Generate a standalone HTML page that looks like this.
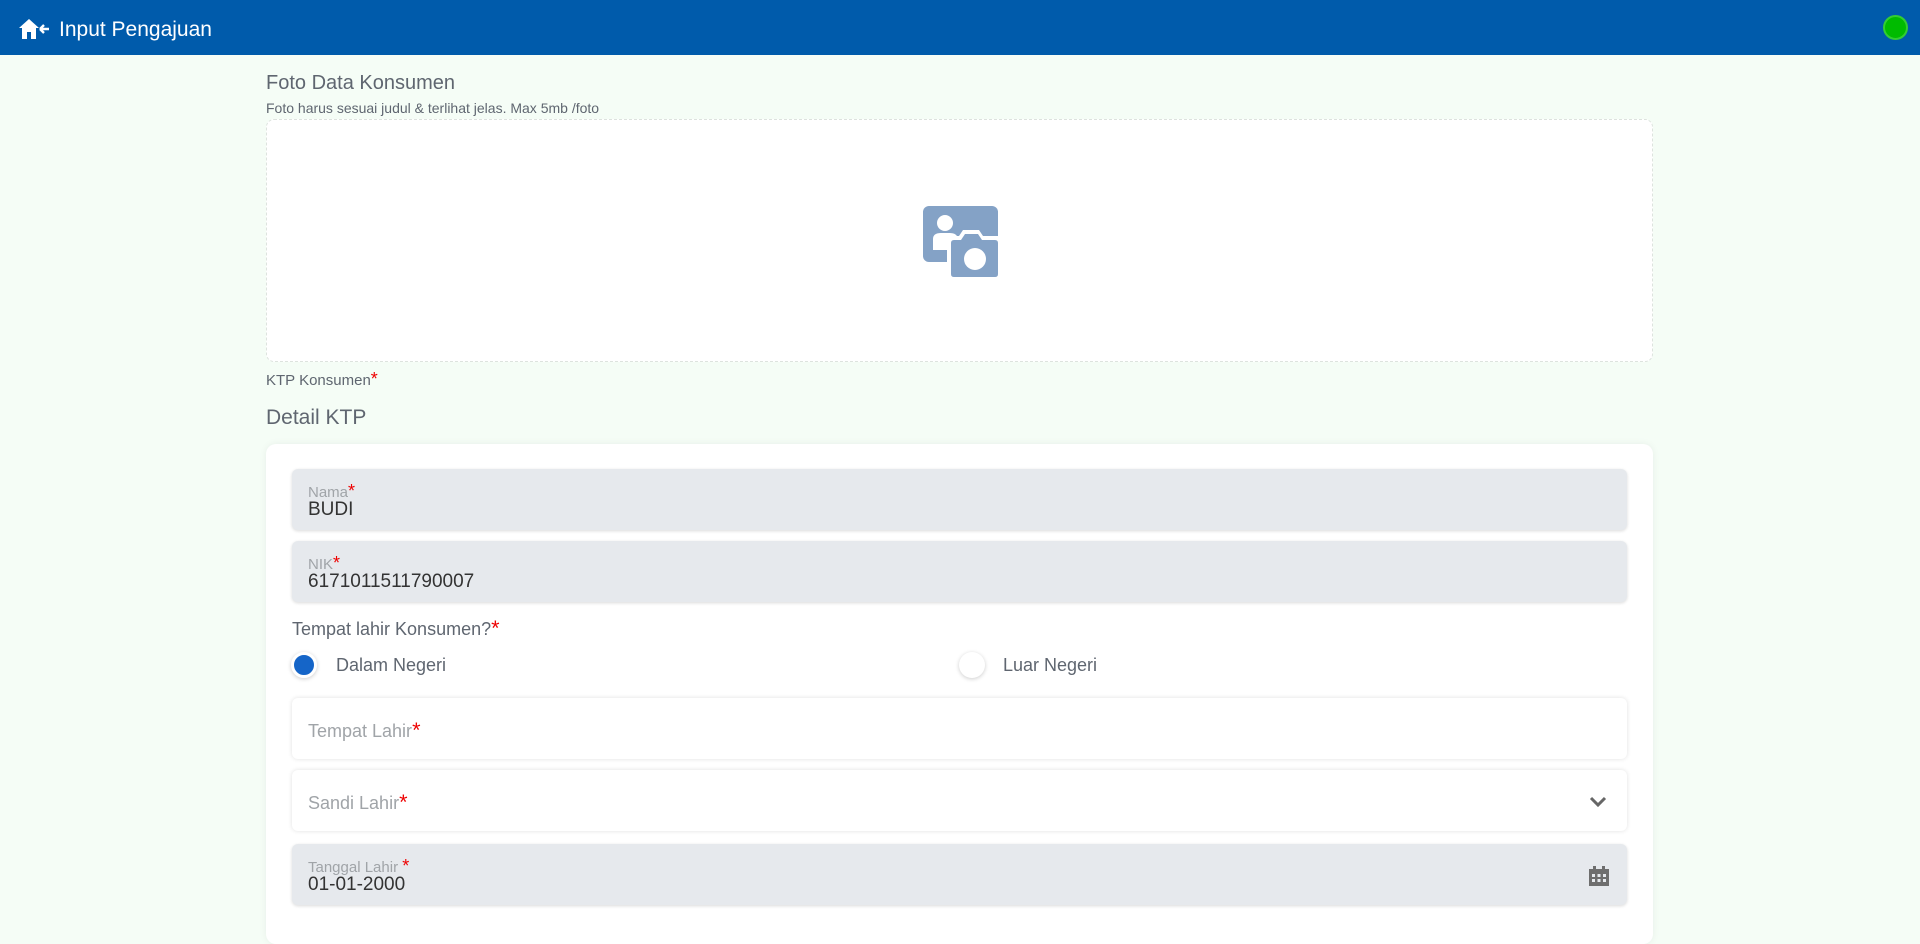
<!DOCTYPE html>
<html><head><meta charset="utf-8"><style>
*{box-sizing:border-box;margin:0;padding:0}
body{width:1920px;height:913px;overflow:hidden;background:#f5fdf6;font-family:"Liberation Sans","DejaVu Sans",sans-serif;color:#5f6670;position:relative}
.hdr{position:absolute;left:0;top:0;width:1920px;height:55px;background:#005bab}
.hdr .t{position:absolute;left:59px;top:18px;font-size:21px;color:#fff}
.dot{position:absolute;left:1883px;top:15px;width:25px;height:25px;border-radius:50%;background:#00bb00;border:2px solid #33cc33}
.abs{position:absolute}
.req{color:#e00;font-size:1.2em}
.box{position:absolute;left:266px;top:119px;width:1387px;height:243px;border:1px dashed #dde3de;border-radius:8px;background:#fff}
.card{position:absolute;left:266px;top:444px;width:1387px;height:500px;background:#fff;border-radius:10px;box-shadow:0 0 8px rgba(0,0,0,.06)}
.f{position:absolute;left:292px;width:1335px;height:61px;border-radius:6px}
.g{background:#e6e9ed;box-shadow:0 1px 3px rgba(0,0,0,.15)}
.w{background:#fff;box-shadow:0 0 5px rgba(0,0,0,.12)}
.lbl{position:absolute;left:16px;top:12px;font-size:15px;color:#a0a4a8}
.val{position:absolute;left:16px;top:30px;font-size:19px;color:#333}
.ph{position:absolute;left:16px;top:19px;font-size:18px;color:#a0a4a8}
.radio{position:absolute;width:26px;height:26px;border-radius:50%;background:#fff;box-shadow:0 1px 4px rgba(0,0,0,.2)}
</style></head><body>
<div class="hdr">
<svg class="abs" style="left:18px;top:18px" width="32" height="22" viewBox="0 0 32 22"><path d="M11 1 L1 10 H4 V21 H9 V14 H13 V21 H18 V10 H21 Z" fill="#fff"/><path d="M22 11 H31 M22 11 L26 7 M22 11 L26 15" stroke="#fff" stroke-width="2.4" fill="none"/></svg>
<div class="t">Input Pengajuan</div>
<div class="dot"></div>
</div>
<div class="abs" style="left:266px;top:72px;font-size:20px;color:#5f6670">Foto Data Konsumen</div>
<div class="abs" style="left:266px;top:100px;font-size:14px;color:#5f6670">Foto harus sesuai judul &amp; terlihat jelas. Max 5mb /foto</div>
<div class="box">
<svg class="abs" style="left:656px;top:86px" width="76" height="72" viewBox="0 0 76 72"><rect x="0" y="0" width="75" height="56" rx="6" fill="#84a2c6"/><circle cx="22" cy="17" r="8" fill="#fff"/><path d="M10 44 V33 Q10 27 18 27 H27 Q32 27 34 30 V44 Z" fill="#fff"/><path d="M24 34 Q24 30 28 30 H36 L40 24 H56 L60 30 H76 V72 H28 Q24 72 24 68 Z" fill="#fff"/><path d="M28 37 Q28 34 31 34 H38 L42 28 H55 L59 34 H72 Q75 34 75 37 V68 Q75 71 72 71 H31 Q28 71 28 68 Z" fill="#84a2c6"/><circle cx="52" cy="53" r="11" fill="#fff"/></svg>
</div>
<div class="abs" style="left:266px;top:369px;font-size:15px;color:#5f6670">KTP Konsumen<span class="req">*</span></div>
<div class="abs" style="left:266px;top:406px;font-size:21px;color:#5f6670">Detail KTP</div>
<div class="card"></div>
<div class="f g" style="top:469px"><div class="lbl">Nama<span class="req">*</span></div><div class="val">BUDI</div></div>
<div class="f g" style="top:541px"><div class="lbl">NIK<span class="req">*</span></div><div class="val">6171011511790007</div></div>
<div class="abs" style="left:292px;top:615px;font-size:18px;color:#5f6670">Tempat lahir Konsumen?<span class="req">*</span></div>
<div class="radio" style="left:291px;top:652px;background:#1565c8;border:3px solid #fff"></div>
<div class="abs" style="left:336px;top:655px;font-size:18px;color:#5f6670">Dalam Negeri</div>
<div class="radio" style="left:959px;top:652px"></div>
<div class="abs" style="left:1003px;top:655px;font-size:18px;color:#5f6670">Luar Negeri</div>
<div class="f w" style="top:698px"><div class="ph">Tempat Lahir<span class="req">*</span></div></div>
<div class="f w" style="top:770px"><div class="ph">Sandi Lahir<span class="req">*</span></div>
<svg class="abs" style="left:1297px;top:26px" width="18" height="12" viewBox="0 0 18 12"><path d="M2 2 L9 9 L16 2" stroke="#666" stroke-width="3" fill="none"/></svg></div>
<div class="f g" style="top:844px"><div class="lbl">Tanggal Lahir <span class="req">*</span></div><div class="val">01-01-2000</div>
<svg class="abs" style="left:1297px;top:22px" width="20" height="20" viewBox="0 0 20 20"><rect x="0" y="3" width="20" height="17" fill="#6e6e6e"/><rect x="4" y="0" width="3" height="5" fill="#6e6e6e"/><rect x="13" y="0" width="3" height="5" fill="#6e6e6e"/><g fill="#e6e9ed"><rect x="3" y="8" width="3" height="3"/><rect x="8.5" y="8" width="3" height="3"/><rect x="14" y="8" width="3" height="3"/><rect x="3" y="13" width="3" height="3"/><rect x="8.5" y="13" width="3" height="3"/><rect x="14" y="13" width="3" height="3"/></g></svg></div>
</body></html>
